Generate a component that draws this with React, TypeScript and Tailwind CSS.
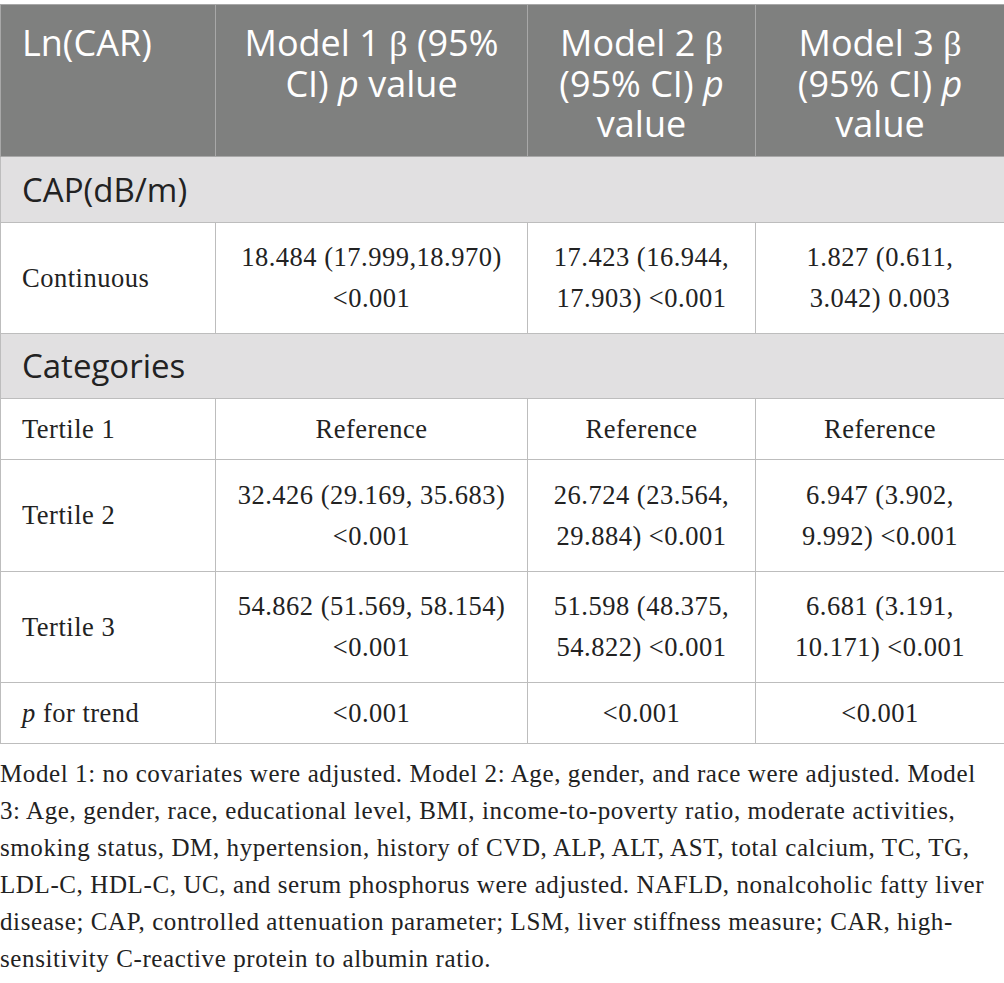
import React from 'react';

const sans = "font-['Open_Sans',sans-serif]";
const serif = "font-['Liberation_Serif',serif]";

type Row = { label: React.ReactNode; cells: React.ReactNode[]; h: string };

const rows: (Row | { section: string; h: string })[] = [
  { section: 'CAP(dB/m)', h: 'h-[66px]' },
  {
    label: 'Continuous',
    cells: [
      <>18.484 (17.999,18.970)<br />&lt;0.001</>,
      <>17.423 (16.944,<br />17.903) &lt;0.001</>,
      <>1.827 (0.611,<br />3.042) 0.003</>,
    ],
    h: 'h-[111px]',
  },
  { section: 'Categories', h: 'h-[65px]' },
  { label: 'Tertile 1', cells: ['Reference', 'Reference', 'Reference'], h: 'h-[61px]' },
  {
    label: 'Tertile 2',
    cells: [
      <>32.426 (29.169, 35.683)<br />&lt;0.001</>,
      <>26.724 (23.564,<br />29.884) &lt;0.001</>,
      <>6.947 (3.902,<br />9.992) &lt;0.001</>,
    ],
    h: 'h-[112px]',
  },
  {
    label: 'Tertile 3',
    cells: [
      <>54.862 (51.569, 58.154)<br />&lt;0.001</>,
      <>51.598 (48.375,<br />54.822) &lt;0.001</>,
      <>6.681 (3.191,<br />10.171) &lt;0.001</>,
    ],
    h: 'h-[111px]',
  },
  {
    label: <><i>p</i> for trend</>,
    cells: ['<0.001', '<0.001', '<0.001'],
    h: 'h-[61px]',
  },
];

export default function App() {
  return (
    <div className="w-[1004px] bg-white pt-[4px] text-[#222]">
      <table className="w-[1004px] table-fixed border-collapse">
        <colgroup>
          <col className="w-[215px]" />
          <col className="w-[312px]" />
          <col className="w-[228px]" />
          <col className="w-[249px]" />
        </colgroup>
        <thead>
          <tr className={`h-[152px] bg-[#7f807f] text-white ${sans} text-[36px] leading-[40px]`}>
            <th className="border border-[#a8a8a8] px-[21px] pt-[18px] text-left align-top font-normal">Ln(CAR)</th>
            <th className="border border-[#a8a8a8] px-[8px] pt-[18px] text-center align-top font-normal">
              Model 1 <span className={serif}>β</span> (95%
              <br />
              CI) <i>p</i> value
            </th>
            <th className="border border-[#a8a8a8] px-[8px] pt-[18px] text-center align-top font-normal">
              Model 2 <span className={serif}>β</span>
              <br />
              (95% CI) <i>p</i>
              <br />
              value
            </th>
            <th className="border border-[#a8a8a8] px-[8px] pt-[18px] text-center align-top font-normal">
              Model 3 <span className={serif}>β</span>
              <br />
              (95% CI) <i>p</i>
              <br />
              value
            </th>
          </tr>
        </thead>
        <tbody>
          {rows.map((r, i) =>
            'section' in r ? (
              <tr key={i} className={`${r.h} bg-[#e1e0e1]`}>
                <td colSpan={4} className={`border border-[#bdbdbd] px-[21px] ${sans} text-[33px] text-[#222]`}>
                  {r.section}
                </td>
              </tr>
            ) : (
              <tr key={i} className={`${r.h} ${serif} text-[26.5px] leading-[41px] tracking-[0.5px]`}>
                <td className="border border-[#bdbdbd] px-[21px] text-left align-middle whitespace-nowrap">{r.label}</td>
                {r.cells.map((c, j) => (
                  <td key={j} className="border border-[#bdbdbd] px-[4px] text-center align-middle whitespace-nowrap">
                    {c}
                  </td>
                ))}
              </tr>
            )
          )}
        </tbody>
      </table>
      <p className={`mt-[11px] ${serif} text-[25px] leading-[37px] tracking-[0.6px] text-[#222] whitespace-nowrap`}>
        Model 1: no covariates were adjusted. Model 2: Age, gender, and race were adjusted. Model
        <br />
        3: Age, gender, race, educational level, BMI, income-to-poverty ratio, moderate activities,
        <br />
        smoking status, DM, hypertension, history of CVD, ALP, ALT, AST, total calcium, TC, TG,
        <br />
        LDL-C, HDL-C, UC, and serum phosphorus were adjusted. NAFLD, nonalcoholic fatty liver
        <br />
        disease; CAP, controlled attenuation parameter; LSM, liver stiffness measure; CAR, high-
        <br />
        sensitivity C-reactive protein to albumin ratio.
      </p>
    </div>
  );
}
